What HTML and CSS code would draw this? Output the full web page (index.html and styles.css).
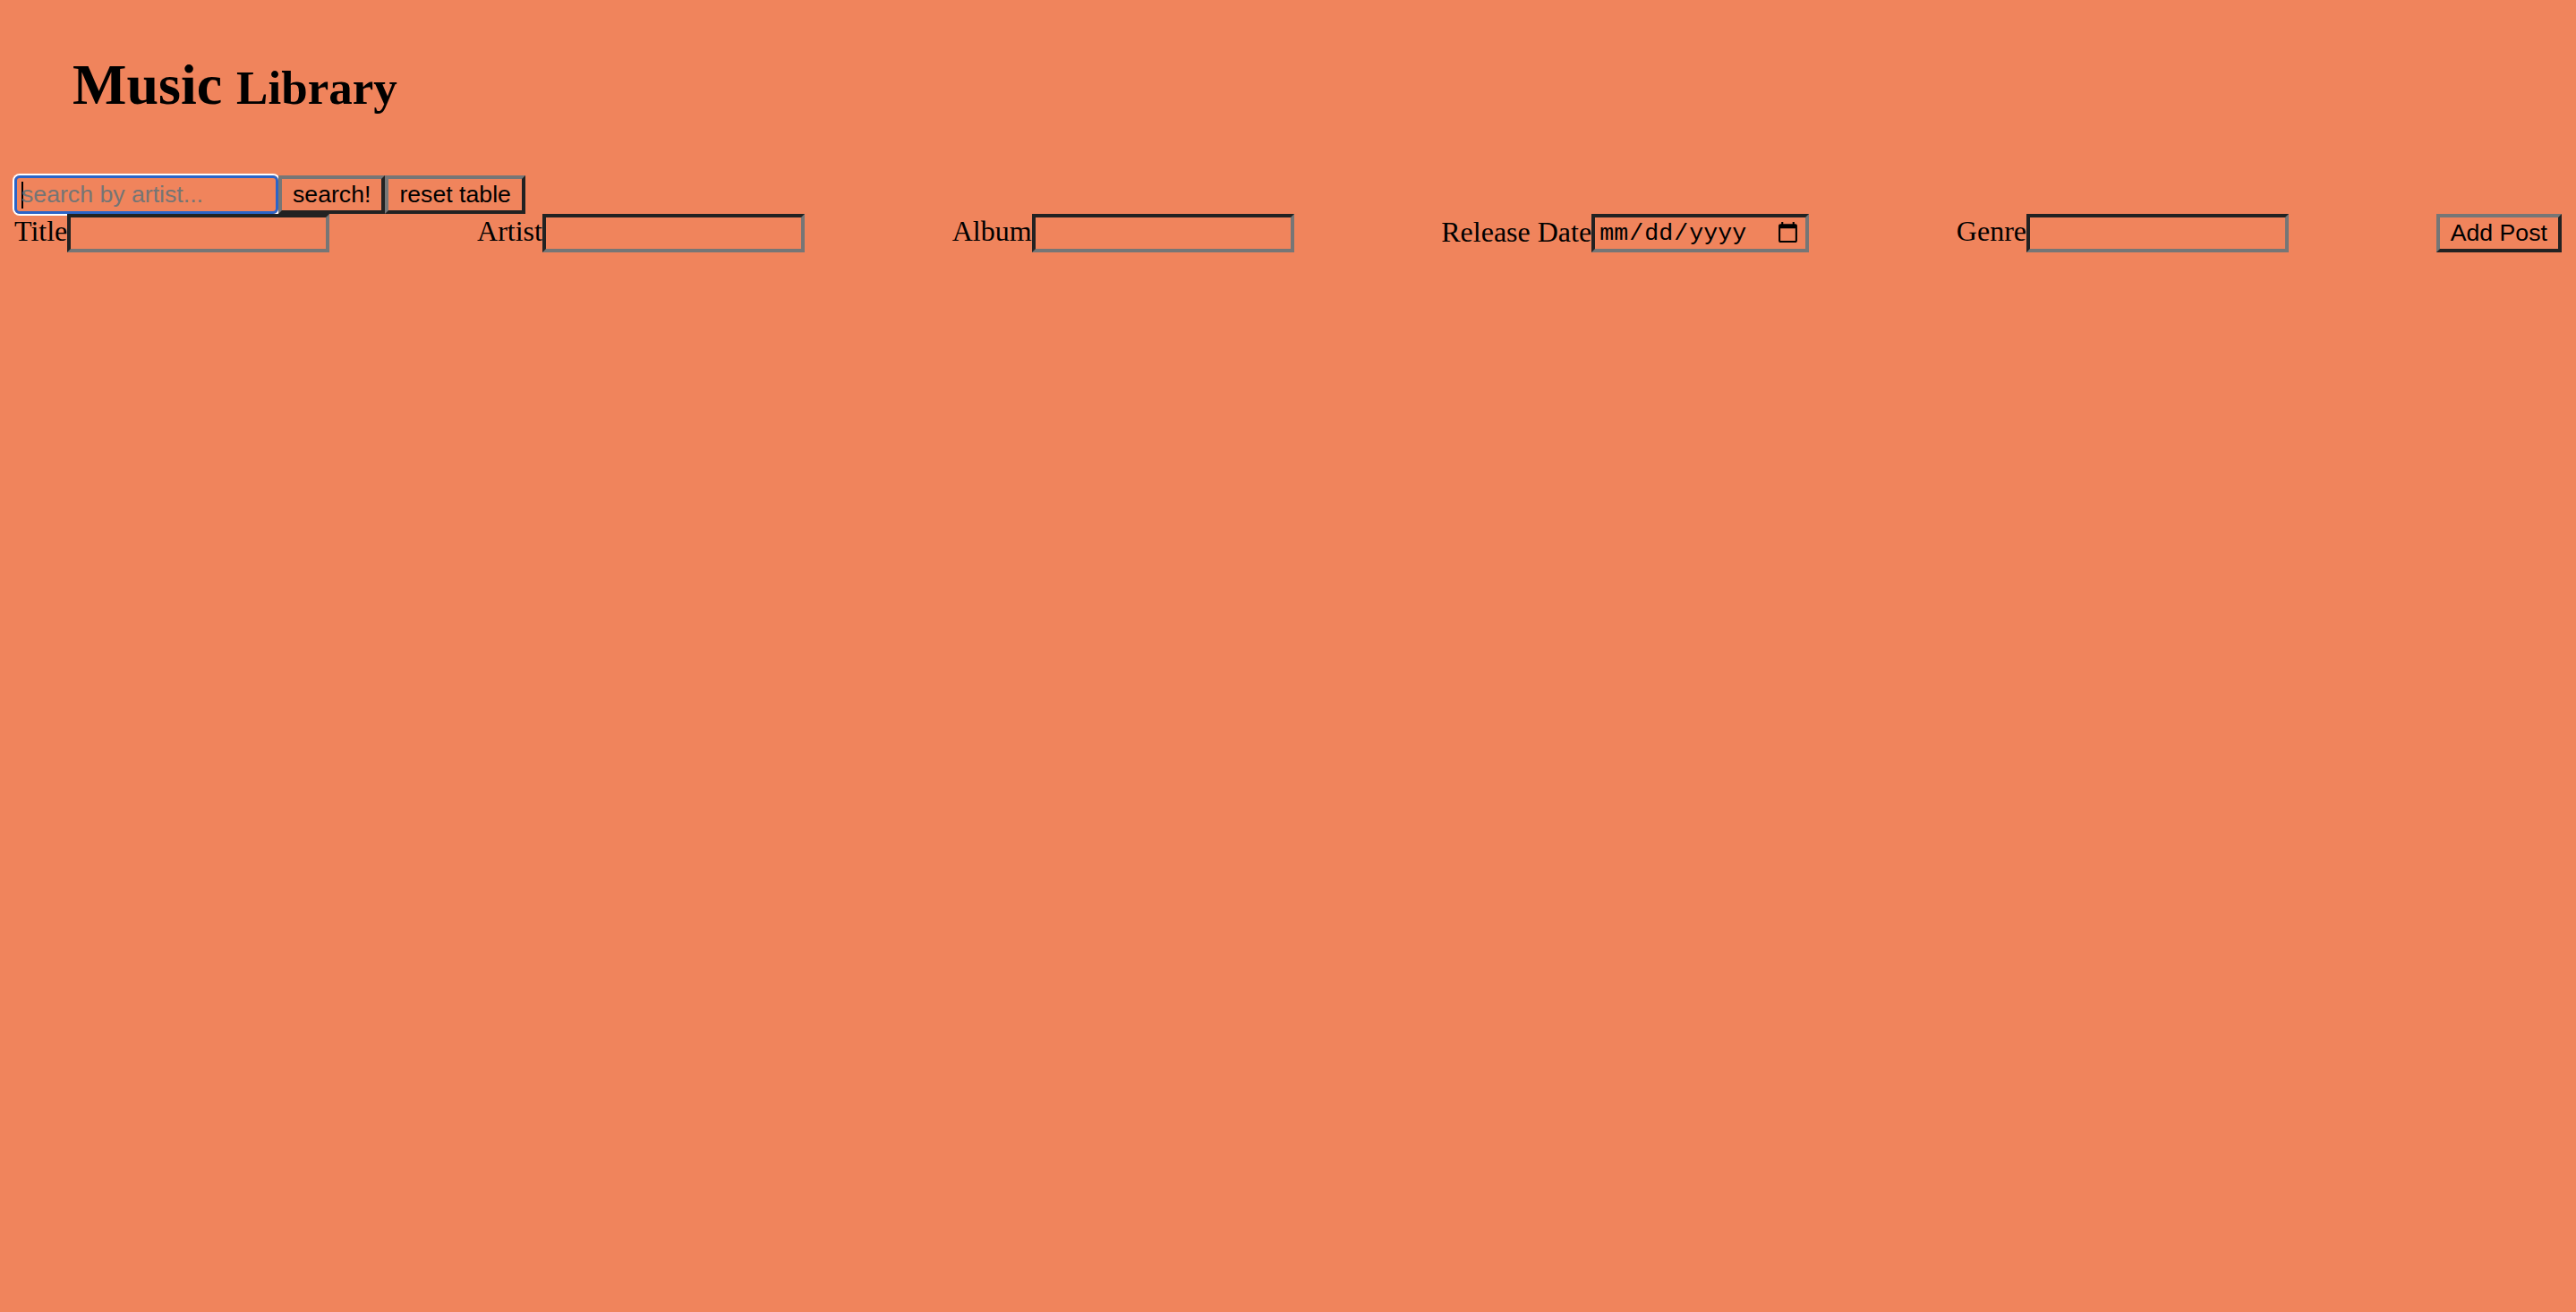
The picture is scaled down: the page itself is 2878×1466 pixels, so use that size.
FILE: index.html
```html
<!DOCTYPE html>
<html lang="en">
<head>
<meta charset="utf-8">
<title>Music Library</title>
<link rel="stylesheet" href="styles.css">
</head>
<body>
<div class="page">
  <h1 class="title">Music <span class="title-small">Library</span></h1>
  <div class="search-row"><input class="field search-field" type="text" placeholder="search by artist..."><button class="btn" type="button">search!</button><button class="btn" type="button">reset table</button></div>
  <form class="post-form">
    <label class="group">Title<input class="field" type="text"></label>
    <label class="group">Artist<input class="field" type="text"></label>
    <label class="group">Album<input class="field" type="text"></label>
    <label class="group">Release Date<input class="field date-field" type="date"></label>
    <label class="group">Genre<input class="field" type="text"></label>
    <button class="btn" type="button">Add Post</button>
  </form>
</div>
</body>
</html>
```
FILE: styles.css
```css
html, body {
  margin: 0;
  padding: 0;
  background: #f0845c;
}

body {
  font-family: "Liberation Serif", "Times New Roman", serif;
  font-size: 32px;
  color: #000;
  min-height: 1466px;
}

.page {
  display: flow-root;
  padding: 0 16px;
}

.title {
  margin: 58px 0 64px 65px;
  font-size: 64px;
  line-height: 74px;
  font-weight: bold;
}

.title-small {
  font-size: 53px;
  line-height: 1;
}

.search-row {
  display: flex;
  align-items: flex-start;
}

.field {
  box-sizing: border-box;
  width: 293px;
  height: 43px;
  margin: 0;
  padding: 2px 4px;
  font-family: "Liberation Sans", Arial, sans-serif;
  font-size: 26.67px;
  color: #000;
  background: transparent;
  border-style: solid;
  border-width: 4px;
  border-color: #222 #767676 #767676 #222;
  border-radius: 0;
  outline: none;
}

.field::placeholder {
  color: #757575;
}

.search-field {
  width: 295px;
  border: 3px solid #2c64c8;
  border-radius: 6px;
  padding: 2px 5px;
  box-shadow: 0 0 0 2px #ffffff;
  background-image: linear-gradient(#000, #000);
  background-repeat: no-repeat;
  background-size: 2px 30px;
  background-position: 5px center;
}

.date-field {
  width: 243px;
  font-family: "Liberation Mono", "Courier New", monospace;
  font-size: 26.67px;
  vertical-align: 2px;
}

.btn {
  box-sizing: border-box;
  height: 43px;
  margin: 0;
  padding: 2px 12px;
  font-family: "Liberation Sans", Arial, sans-serif;
  font-size: 26.67px;
  color: #000;
  background: transparent;
  border-style: solid;
  border-width: 4px;
  border-color: #767676 #222 #222 #767676;
  border-radius: 0;
}

.post-form {
  display: flex;
  justify-content: space-between;
  align-items: flex-start;
  margin: 0;
}

.group {
  white-space: nowrap;
}
```
